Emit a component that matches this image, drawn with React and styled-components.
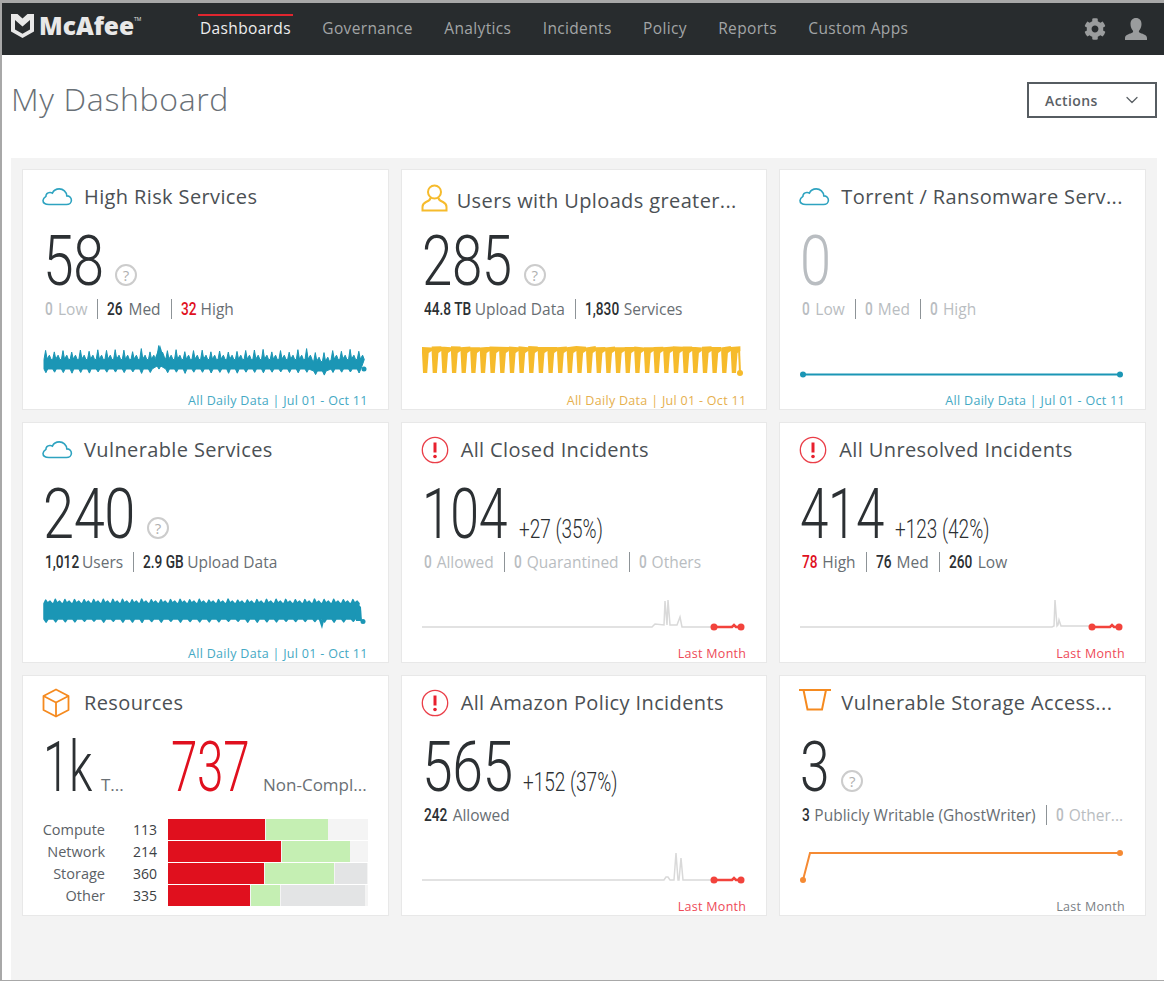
import React from 'react';
import styled, { createGlobalStyle } from 'styled-components';
import { FaCog } from 'react-icons/fa';
import { ChevronDown } from 'lucide-react';

const TEAL = '#1b96b5';
const AMBER = '#f6bb2c';
const RED = '#f2433c';
const ORANGE = '#f58a33';

const Global = createGlobalStyle`
  html, body { margin: 0; padding: 0; background: #fff; }
  * { box-sizing: border-box; }
  body { font-family: "Open Sans", "Liberation Sans", sans-serif; }
`;

const Page = styled.div`
  width: 1164px;
  height: 981px;
  overflow: hidden;
  border-top: 3px solid #a8a8a8;
  border-left: 2px solid #a8a8a8;
  border-bottom: 1px solid #a8a8a8;
  display: flex;
  flex-direction: column;
`;

const Header = styled.header`
  height: 52px;
  flex: none;
  background: #282c2e;
  display: flex;
  align-items: flex-start;
  padding-left: 9px;
`;

const Logo = styled.div`
  width: 187px;
  height: 52px;
  flex: none;
  display: flex;
  align-items: center;
  gap: 5px;
  color: #e8e8e8;
  padding-bottom: 6px;
`;

const LogoWord = styled.span`
  font-weight: 800;
  font-size: 24.5px;
  line-height: 1;
  white-space: nowrap;
`;

const Tm = styled.sup`
  font-size: 5px;
  font-weight: 400;
  vertical-align: 14px;
  line-height: 0;
`;

const Nav = styled.nav`
  display: flex;
  gap: 27.4px;
`;

const NavItem = styled.a`
  margin-top: 11px;
  border-top: 2px solid ${p => (p.$active ? '#e0262f' : 'transparent')};
  padding: 1px 2px 0;
  font-size: 15.5px;
  line-height: 22px;
  letter-spacing: 0.35px;
  color: ${p => (p.$active ? '#eeeeee' : '#a2a5a6')};
  font-weight: ${p => (p.$active ? 500 : 400)};
`;

const HeaderTools = styled.div`
  margin-left: auto;
  display: flex;
  align-items: center;
  height: 52px;
  gap: 19px;
  padding-right: 17px;
  color: #9a9c9d;
`;

const TitleBar = styled.div`
  height: 103px;
  flex: none;
  display: flex;
  align-items: flex-start;
  justify-content: space-between;
  padding: 26px 7px 0 9px;
`;

const PageTitle = styled.h1`
  margin: 0;
  font-size: 32px;
  line-height: 36px;
  font-weight: 300;
  letter-spacing: 0.65px;
  color: #697076;
`;

const ActionButton = styled.button`
  width: 130px;
  height: 36px;
  margin-top: 1px;
  background: #fff;
  border: 2px solid #565c61;
  font-family: inherit;
  font-size: 14px;
  font-weight: 600;
  letter-spacing: 0.4px;
  color: #5a6065;
  display: flex;
  align-items: center;
  justify-content: space-between;
  padding: 0 13px 0 16px;
`;

const Panel = styled.main`
  flex: 1;
  margin: 0 7px 0 9px;
  padding: 11px 11px 0;
  background: #f3f3f3;
  display: grid;
  grid-template-columns: repeat(3, 1fr);
  grid-auto-rows: 241px;
  gap: 12px;
`;

const Card = styled.section`
  background: #fff;
  border: 1px solid #e8e8e8;
  display: flex;
  flex-direction: column;
  min-width: 0;
`;

const Head = styled.div`
  height: 55px;
  flex: none;
  display: flex;
  align-items: center;
  padding: ${p => p.$drop || 0}px 0 2px 19px;
`;

const IconSlot = styled.div`
  width: ${p => p.$w}px;
  flex: none;
  display: flex;
  margin-top: ${p => p.$lift || 0}px;
`;

const Title = styled.h2`
  margin: 0;
  font-size: 20px;
  font-weight: 400;
  line-height: 28px;
  white-space: nowrap;
  letter-spacing: 0.38px;
  color: #4b5054;
`;

const Figures = styled.div`
  height: 72px;
  flex: none;
  display: flex;
  align-items: baseline;
  padding-left: 20px;
  line-height: 72px;
`;

const Big = styled.span`
  font-family: "Roboto", sans-serif;
  font-weight: 300;
  font-size: 70px;
  line-height: 72px;
  display: inline-block;
  width: ${p => p.$w}px;
  flex: none;
  transform: scaleX(${p => p.$sx});
  transform-origin: left center;
  letter-spacing: -0.5px;
  white-space: nowrap;
  color: ${p => (p.$tone === 'red' ? '#e0101e' : p.$tone === 'muted' ? '#b9bdc1' : '#2c3033')};
`;

const Help = styled.span`
  width: 22px;
  height: 22px;
  border: 2px solid #cccccc;
  border-radius: 50%;
  margin-left: 14px;
  flex: none;
  align-self: flex-end;
  margin-bottom: 11px;
  display: flex;
  align-items: center;
  justify-content: center;
  font-size: 15px;
  font-weight: 400;
  line-height: 1;
  color: #b0b0b0;
`;

const Delta = styled.span`
  font-family: "Roboto", sans-serif;
  font-weight: 300;
  font-size: 25px;
  margin-left: 14px;
  display: inline-block;
  transform: scaleX(0.76);
  transform-origin: left center;
  white-space: nowrap;
  color: #2c3033;
`;

const FigNote = styled.span`
  font-size: 17px;
  margin-left: ${p => p.$gap}px;
  width: ${p => p.$w}px;
  flex: none;
  white-space: nowrap;
  color: #6a7075;
`;

const Stats = styled.div`
  height: 24px;
  flex: none;
  display: flex;
  align-items: center;
  padding-left: 22px;
  font-size: 15.5px;
  white-space: nowrap;
  overflow: hidden;
`;

const Stat = styled.span`
  display: flex;
  align-items: baseline;
  height: 20px;
  line-height: 20px;
  padding: 0 10px 0 9px;
  border-left: 1px solid #8d9397;
  color: ${p => (p.$muted ? '#b9bdc1' : '#686e73')};
  &:first-child { border-left: 0; padding-left: 0; }
`;

const StatNum = styled.b`
  font-family: "Roboto", sans-serif;
  font-weight: 500;
  font-size: 18px;
  display: inline-block;
  transform: scaleX(0.76);
  transform-origin: left center;
  white-space: nowrap;
  width: ${p => p.$w}px;
  margin-right: 3px;
  color: ${p => (p.$tone === 'red' ? '#e0101e' : p.$tone === 'muted' ? '#b9bdc1' : '#2c3033')};
`;

const ChartBox = styled.svg`
  display: block;
  flex: none;
  width: 330px;
  height: 50px;
  margin: 13px 0 0 19px;
`;

const Footer = styled.div`
  flex: none;
  height: 17px;
  margin-top: 8px;
  padding-right: 20px;
  text-align: right;
  font-size: 12.5px;
  line-height: 18px;
  letter-spacing: 0.3px;
  color: ${p => p.$color};
`;

const Breakdown = styled.div`
  display: flex;
  flex-direction: column;
  gap: 1px;
  margin-top: 16px;
`;

const BreakRow = styled.div`
  display: grid;
  grid-template-columns: 82px 52px 200px;
  height: 21px;
  align-items: center;
  font-size: 14.5px;
`;

const BreakLabel = styled.span`
  text-align: right;
  color: #5b6166;
`;

const BreakCount = styled.span`
  text-align: right;
  font-weight: 500;
  font-size: 14px;
  color: #3c4144;
`;

const Bar = styled.div`
  margin-left: 11px;
  height: 21px;
  width: 200px;
  display: flex;
  gap: 1px;
  background: #f4f4f4;
`;

const Seg = styled.i`
  display: block;
  height: 100%;
  background: ${p => p.$c};
`;

function rng(seed) {
  let s = seed;
  return () => {
    s = (s * 9301 + 49297) % 233280;
    return s / 233280;
  };
}

function band(x0, x1, period, top, peak, bot, dip, seed, warp = () => 0) {
  const r = rng(seed);
  const upper = [];
  const lower = [];
  for (let x = x0; x < x1 - period * 0.5; x += period) {
    const j = r();
    const k = r();
    const w = warp(x);
    upper.push(
      [x, top + w + 1.5],
      [x + period * 0.18, top + w - peak * (0.7 + j * 0.5)],
      [x + period * 0.36, top + w + 1],
      [x + period * 0.62, top + w - peak * 0.35],
      [x + period * 0.82, top + w + 1.5]
    );
    lower.push(
      [x, bot + w],
      [x + period * 0.22, bot + w + dip * (0.7 + k * 0.4)],
      [x + period * 0.42, bot + w]
    );
  }
  const pts = [...upper, ...lower.reverse()];
  return 'M' + pts.map(p => `${p[0].toFixed(1)} ${p[1].toFixed(1)}`).join('L') + 'Z';
}

function comb(x0, count, pitch, leg, top, core, bot, seed) {
  const r = rng(seed);
  let d = '';
  for (let i = 0; i < count; i++) {
    const x = x0 + i * pitch;
    const t = top + r() * 1.6;
    d += `M${x.toFixed(1)} ${t.toFixed(1)}L${(x + pitch).toFixed(1)} ${(top + r() * 1.6).toFixed(1)}L${(x + pitch).toFixed(1)} ${core}L${(x + leg + 1.5).toFixed(1)} ${core + 2}L${(x + leg).toFixed(1)} ${bot}L${(x + 1).toFixed(1)} ${bot}L${x.toFixed(1)} ${core + 2}Z`;
  }
  return d;
}

const Dot = ({ x, y, c, r = 3 }) => <circle cx={x} cy={y} r={r} fill={c} />;

const HighRiskChart = () => (
  <ChartBox viewBox="0 0 330 50">
    <path
      fill={TEAL}
      stroke={TEAL}
      strokeWidth="1"
      strokeLinejoin="round"
      d={band(2, 326, 8.7, 24, 8, 35, 4, 7, x => (x > 108 && x < 122 ? -3 : x > 268 && x < 282 ? 2 : 0))}
    />
    <path fill={TEAL} d="M113 24L118 11L122 24L128 32L120 30Z" />
    <Dot x={322} y={35} c={TEAL} r={2.5} />
  </ChartBox>
);

const UploadChart = () => (
  <ChartBox viewBox="0 0 330 50">
    <path fill={AMBER} d={comb(1, 33, 9.65, 5.2, 12, 17, 39, 11)} />
    <path fill={AMBER} d="M317 14L319 14L320 39L318 39Z" />
    <Dot x={319} y={39} c={AMBER} r={3} />
  </ChartBox>
);

const FlatChart = () => (
  <ChartBox viewBox="0 0 330 50">
    <path d="M4 40.500H321" stroke={TEAL} strokeWidth="2" fill="none" />
    <Dot x={4} y={40.500} c={TEAL} />
    <Dot x={321} y={40.500} c={TEAL} />
  </ChartBox>
);

const VulnerableChart = () => (
  <ChartBox viewBox="0 0 330 50">
    <path
      fill={TEAL}
      stroke={TEAL}
      strokeWidth="1.5"
      strokeLinejoin="round"
      d={band(2, 321, 9.6, 15, 2.5, 32, 3, 23)}
    />
    <path fill={TEAL} d="M276 30L280 42L282 34Z" />
    <path fill={TEAL} d="M314 15L319 20L320 34L314 34Z" />
    <Dot x={321} y={34.500} c={TEAL} r={2.5} />
  </ChartBox>
);

const Incident = ({ spikes, redBump }) => (
  <ChartBox viewBox="0 0 330 50">
    <path d={`M1 40${spikes}H293`} stroke="#d9d9d9" strokeWidth="1.5" fill="none" />
    <path d={`M293 40H${redBump - 2}L${redBump} 38L${redBump + 2} 40H320`} stroke={RED} strokeWidth="2.500" fill="none" />
    <Dot x={293} y={40} c={RED} r={3.500} />
    <Dot x={320} y={40} c={RED} r={3.500} />
  </ChartBox>
);

const StorageChart = () => (
  <ChartBox viewBox="0 0 330 50">
    <path d="M4 40L11 13H321" stroke={ORANGE} strokeWidth="2" fill="none" />
    <Dot x={4} y={40} c={ORANGE} />
    <Dot x={321} y={13} c={ORANGE} />
  </ChartBox>
);

const CloudIcon = () => (
  <svg width="31" height="19" viewBox="0 0 31 19" fill="none" stroke="#2ea3c0" strokeWidth="1.6">
    <path d="M7 17.5h17.5c2.7 0 4.9-1.8 4.9-4.3 0-2.4-2-4.3-4.6-4.3-.3-3.9-3.5-7-7.6-7-3 0-5.6 1.7-6.8 4.2-.8-.5-1.7-.7-2.6-.6-2.2.2-3.8 1.8-3.9 3.9C2.2 10.6 1 12 1 13.6c0 2.2 2.2 3.9 6 3.9z" />
  </svg>
);

const UserIcon = () => (
  <svg width="27" height="28" viewBox="0 0 27 28" fill="none" stroke="#f6bb2c" strokeWidth="2">
    <circle cx="13.5" cy="8" r="6.5" />
    <path d="M9.5 14c-.3 2-2 3-4.500 4C3 19 1.500 20.500 1.500 23v3.500h24V23c0-2.500-1.500-4-3.500-5-2.500-1-4.200-2-4.500-4" />
  </svg>
);

const AlertIcon = () => (
  <svg width="28" height="28" viewBox="0 0 28 28" fill="none">
    <circle cx="14" cy="14" r="12.700" stroke="#ea3e48" strokeWidth="1.300" />
    <path d="M14 6.500v10" stroke="#e8202e" strokeWidth="3" />
    <circle cx="14" cy="20.500" r="1.800" fill="#e8202e" />
  </svg>
);

const CubeIcon = () => (
  <svg width="28" height="30" viewBox="0 0 28 30" fill="none" stroke="#f58a1f" strokeWidth="1.800" strokeLinejoin="round">
    <path d="M14 1.500 26.500 8v14L14 28.500 1.500 22V8z" />
    <path d="M1.500 8 14 14.500 26.500 8M14 14.500v14" />
  </svg>
);

const BucketIcon = () => (
  <svg width="32" height="23" viewBox="0 0 32 23" fill="none" stroke="#f58a1f" strokeWidth="2">
    <path d="M0 2h32" />
    <path d="M4.500 2 8.500 21.500h14.500L27 2" />
  </svg>
);

const Shield = () => (
  <svg width="23" height="26" viewBox="0 0 23 26" fill="currentColor">
    <path fillRule="evenodd" d="M0 1h6.500l5 4.500 5-4.500H23v17.500L11.500 25 0 18.500zM4 7v9.500l7.500 4.300 7.500-4.300V7l-7.500 6.500z" />
  </svg>
);

const BustIcon = () => (
  <svg width="22" height="23" viewBox="0 0 22 23" fill="currentColor">
    <path d="M11 0c3.500 0 5.500 2.500 5.500 6 0 2.600-1 5-2.300 6.400-.5.600-.4 1.700.3 2.200 1.900 1.300 7.500 1.900 7.500 5.400V22H0v-2c0-3.500 5.600-4.100 7.500-5.400.7-.5.800-1.600.3-2.200C6.500 11 5.500 8.600 5.500 6 5.500 2.500 7.500 0 11 0z" />
  </svg>
);

const NAV = ['Dashboards', 'Governance', 'Analytics', 'Incidents', 'Policy', 'Reports', 'Custom Apps'];

const RESOURCES = [
  ['Compute', '113', [[97, '#e0101e'], [62, '#c5efb3']]],
  ['Network', '214', [[113, '#e0101e'], [68, '#c5efb3']]],
  ['Storage', '360', [[96, '#e0101e'], [69, '#c5efb3'], [32, '#e3e4e5']]],
  ['Other', '335', [[82, '#e0101e'], [29, '#c5efb3'], [84, '#e3e4e5']]],
];

const StatRow = ({ items }) => (
  <Stats>
    {items.map(([num, label, tone, w]) => (
      <Stat key={label} $muted={tone === 'muted'}>
        <StatNum $tone={tone} $w={w}>{num}</StatNum>
        {label}
      </Stat>
    ))}
  </Stats>
);

const Tile = ({ icon, slot, lift, drop, title, big, bigW, sx, tone, help, delta, stats, chart, foot, footColor }) => (
  <Card>
    <Head $drop={drop}>
      <IconSlot $w={slot} $lift={lift}>{icon}</IconSlot>
      <Title>{title}</Title>
    </Head>
    <Figures>
      <Big $w={bigW} $sx={sx} $tone={tone}>{big}</Big>
      {help && <Help>?</Help>}
      {delta && <Delta>{delta}</Delta>}
    </Figures>
    <StatRow items={stats} />
    {chart}
    <Footer $color={footColor}>{foot}</Footer>
  </Card>
);

const TEALTXT = '#45a9c4';
const AMBERTXT = '#e6b04e';
const REDTXT = '#ee4a58';

export default function App() {
  return (
    <>
      <Global />
      <Page>
        <Header>
          <Logo>
            <Shield />
            <LogoWord>McAfee<Tm>TM</Tm></LogoWord>
          </Logo>
          <Nav>
            {NAV.map((n, i) => (
              <NavItem key={n} $active={i === 0}>{n}</NavItem>
            ))}
          </Nav>
          <HeaderTools>
            <FaCog size={22} />
            <BustIcon />
          </HeaderTools>
        </Header>
        <TitleBar>
          <PageTitle>My Dashboard</PageTitle>
          <ActionButton>
            Actions
            <ChevronDown size={20} strokeWidth={1.5} />
          </ActionButton>
        </TitleBar>
        <Panel>
          <Tile
            icon={<CloudIcon />} slot={42} title="High Risk Services"
            big="58" bigW={58} sx={0.79} help
            stats={[['0', 'Low', 'muted', 10], ['26', 'Med', 'dark', 18], ['32', 'High', 'red', 17]]}
            chart={<HighRiskChart />} foot="All Daily Data | Jul 01 - Oct 11" footColor={TEALTXT}
          />
          <Tile
            icon={<UserIcon />} slot={36} drop={8} lift={-6} title="Users with Uploads greater..."
            big="285" bigW={88} sx={0.78} help
            stats={[['44.8 TB', 'Upload Data', 'dark', 48], ['1,830', 'Services', 'dark', 36]]}
            chart={<UploadChart />} foot="All Daily Data | Jul 01 - Oct 11" footColor={AMBERTXT}
          />
          <Tile
            icon={<CloudIcon />} slot={42} title="Torrent / Ransomware Serv..."
            big="0" tone="muted" bigW={28} sx={0.8}
            stats={[['0', 'Low', 'muted', 10], ['0', 'Med', 'muted', 10], ['0', 'High', 'muted', 10]]}
            chart={<FlatChart />} foot="All Daily Data | Jul 01 - Oct 11" footColor={TEALTXT}
          />
          <Tile
            icon={<CloudIcon />} slot={42} title="Vulnerable Services"
            big="240" bigW={90} sx={0.8} help
            stats={[['1,012', 'Users', 'dark', 34], ['2.9 GB', 'Upload Data', 'dark', 41]]}
            chart={<VulnerableChart />} foot="All Daily Data | Jul 01 - Oct 11" footColor={TEALTXT}
          />
          <Tile
            icon={<AlertIcon />} slot={40} title="All Closed Incidents"
            big="104" bigW={83} sx={0.74} delta="+27 (35%)"
            stats={[['0', 'Allowed', 'muted', 10], ['0', 'Quarantined', 'muted', 10], ['0', 'Others', 'muted', 10]]}
            chart={<Incident redBump={313} spikes="H231L234 37L243 38L244 14L246 38L247 13L249 38L256 38L259 30L261 40H276" />}
            foot="Last Month" footColor={REDTXT}
          />
          <Tile
            icon={<AlertIcon />} slot={40} title="All Unresolved Incidents"
            big="414" bigW={81} sx={0.73} delta="+123 (42%)"
            stats={[['78', 'High', 'red', 17], ['76', 'Med', 'dark', 18], ['260', 'Low', 'dark', 26]]}
            chart={<Incident redBump={313} spikes="H253L255 39L256 13L258 39L259 38L260 33L262 39" />}
            foot="Last Month" footColor={REDTXT}
          />
          <Card>
            <Head>
              <IconSlot $w={42}><CubeIcon /></IconSlot>
              <Title>Resources</Title>
            </Head>
            <Figures>
              <Big $w={47} $sx={0.68}>1k</Big>
              <FigNote $gap={11} $w={70}>T...</FigNote>
              <Big $w={79} $sx={0.68} $tone="red">737</Big>
              <FigNote $gap={13} $w={110}>Non-Compl...</FigNote>
            </Figures>
            <Breakdown>
              {RESOURCES.map(([label, count, segs]) => (
                <BreakRow key={label}>
                  <BreakLabel>{label}</BreakLabel>
                  <BreakCount>{count}</BreakCount>
                  <Bar>
                    {segs.map(([w, c]) => (
                      <Seg key={c} $c={c} style={{ width: w }} />
                    ))}
                  </Bar>
                </BreakRow>
              ))}
            </Breakdown>
          </Card>
          <Tile
            icon={<AlertIcon />} slot={40} title="All Amazon Policy Incidents"
            big="565" bigW={87} sx={0.79} delta="+152 (37%)"
            stats={[['242', 'Allowed', 'dark', 26]]}
            chart={<Incident redBump={313} spikes="H243L245 37L247 37L249 40H253L255 13L257 40L258 40L260 18L262 40H276" />}
            foot="Last Month" footColor={REDTXT}
          />
          <Tile
            icon={<BucketIcon />} slot={42} lift={-6} title="Vulnerable Storage Access..."
            big="3" bigW={27} sx={0.76} help
            stats={[['3', 'Publicly Writable (GhostWriter)', 'dark', 9], ['0', 'Other...', 'muted', 10]]}
            chart={<StorageChart />} foot="Last Month" footColor="#7a8085"
          />
        </Panel>
      </Page>
    </>
  );
}
